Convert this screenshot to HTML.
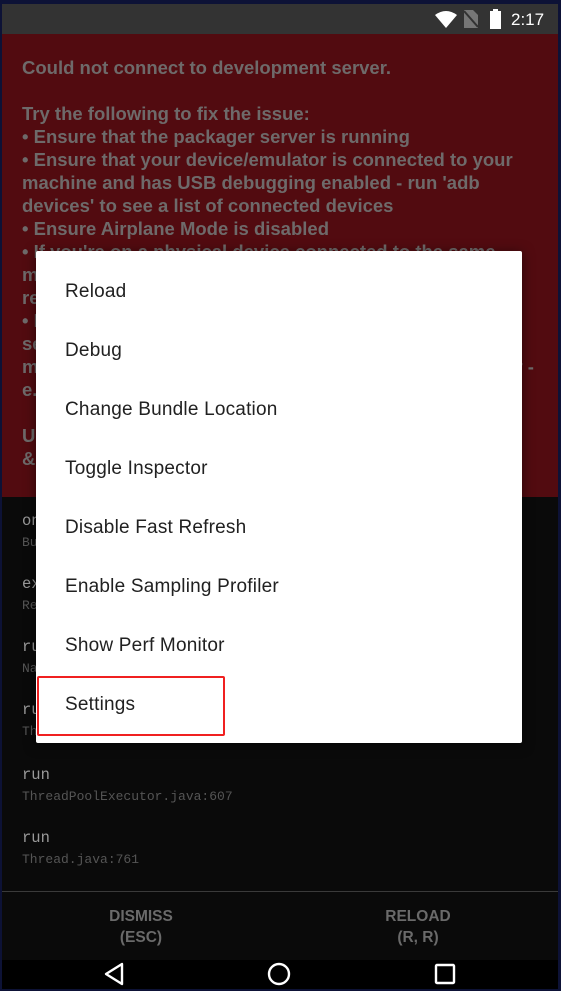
<!DOCTYPE html>
<html><head><meta charset="utf-8"><style>
*{margin:0;padding:0;box-sizing:border-box}
body{width:561px;height:991px;background:#0d1236;position:relative;overflow:hidden;font-family:"Liberation Sans",sans-serif}
#scr{position:absolute;left:2px;top:4px;width:556px;height:985px;background:#0a0a0a;overflow:hidden}
#sb{position:absolute;left:0;top:0;width:556px;height:30px;background:#333}
#red{position:absolute;left:0;top:30px;width:556px;height:463px;background:#520b10}
.rt{position:absolute;left:20px;font-weight:bold;font-size:18.5px;line-height:23px;color:#6e6a6a;white-space:nowrap}
.tr{position:absolute;left:20px;font-family:"Liberation Mono",monospace;white-space:nowrap}
.t1{font-size:15.5px;color:#9a9a9a}
.t2{font-size:13px;color:#555}
#sep{position:absolute;left:0;top:887px;width:556px;height:1px;background:#3a3a3a}
.bt{position:absolute;top:902px;width:200px;text-align:center;font-size:15.5px;font-weight:bold;line-height:21px;color:#6a6a6a}
#nav{position:absolute;left:0;top:956px;width:556px;height:29px;background:#000}
#dlg{position:absolute;left:34px;top:247px;width:486px;height:492px;background:#fff;border-radius:2px;box-shadow:0 2px 12px rgba(0,0,0,.5)}
.it{position:absolute;left:29px;font-size:19px;letter-spacing:0.2px;color:#212121;line-height:20px}
#hl{position:absolute;left:1px;top:425px;width:188px;height:60px;border:2px solid #f02020;border-radius:2px}
</style></head><body>
<div id="scr">
<div id="sb">
<svg style="position:absolute;left:433px;top:7px" width="22" height="17" viewBox="0 0 22 17"><path d="M0 4 Q11 -4 22 4 L11 17Z" fill="#fff"/></svg>
<svg style="position:absolute;left:462px;top:6px" width="14" height="18" viewBox="0 0 14 18"><path d="M0 18V0h9l5 5v13z" fill="#777"/><path d="M0 1L14 17" stroke="#333" stroke-width="2"/></svg>
<svg style="position:absolute;left:488px;top:5px" width="11" height="20" viewBox="0 0 11 20"><rect x="3" y="0" width="5" height="3" fill="#fff"/><rect x="0" y="2" width="11" height="18" fill="#fff"/></svg>
<div style="position:absolute;left:509px;top:6px;color:#fff;font-size:17px">2:17</div>
</div>
<div id="red">
<div class="rt" style="top:22px">Could not connect to development server.</div>
<div class="rt" style="top:68px">Try the following to fix the issue:</div>
<div class="rt" style="top:91px">• Ensure that the packager server is running</div>
<div class="rt" style="top:114px">• Ensure that your device/emulator is connected to your</div>
<div class="rt" style="top:137px">machine and has USB debugging enabled - run 'adb</div>
<div class="rt" style="top:160px">devices' to see a list of connected devices</div>
<div class="rt" style="top:183px">• Ensure Airplane Mode is disabled</div>
<div class="rt" style="top:206px">• If you're on a physical device connected to the same</div>
<div class="rt" style="top:229px">machine, run 'adb reverse tcp:8081 tcp:8081' to forward</div>
<div class="rt" style="top:252px">requests from your device</div>
<div class="rt" style="top:275px">• If your device is on the same Wi-Fi network, set 'Debug</div>
<div class="rt" style="top:298px">server host &amp; port for device' in 'Dev settings' to your</div>
<div class="rt" style="top:321px">machine's IP address and the port of the local dev server -</div>
<div class="rt" style="top:344px">e.g. 10.0.1.1:8081</div>
<div class="rt" style="top:390px">URL: 10.0.2.2:8081/index.bundle?platform=android</div>
<div class="rt" style="top:413px">&amp;dev=true&amp;minify=false</div>
</div>
<div class="tr t1" style="top:508px">onWebSocketMessage</div><div class="tr t2" style="top:531px">BundleDownloader.java:123</div>
<div class="tr t1" style="top:571px">execute</div><div class="tr t2" style="top:594px">RealCall.java:123</div>
<div class="tr t1" style="top:634px">run</div><div class="tr t2" style="top:657px">NamedRunnable.java:32</div>
<div class="tr t1" style="top:697px">run</div><div class="tr t2" style="top:720px">ThreadPoolExecutor.java:1133</div>
<div class="tr t1" style="top:762px">run</div><div class="tr t2" style="top:785px">ThreadPoolExecutor.java:607</div>
<div class="tr t1" style="top:825px">run</div><div class="tr t2" style="top:848px">Thread.java:761</div>
<div id="sep"></div>
<div class="bt" style="left:39px">DISMISS<br>(ESC)</div>
<div class="bt" style="left:316px">RELOAD<br>(R, R)</div>
<div id="nav">
<svg style="position:absolute;left:101px;top:2px" width="22" height="24" viewBox="0 0 22 24"><path d="M19 2L3 12L19 22Z" fill="none" stroke="#fff" stroke-width="2.4" stroke-linejoin="round"/></svg>
<svg style="position:absolute;left:265px;top:2px" width="24" height="24" viewBox="0 0 24 24"><circle cx="12" cy="12" r="10" fill="none" stroke="#fff" stroke-width="2.4"/></svg>
<svg style="position:absolute;left:432px;top:3px" width="22" height="22" viewBox="0 0 22 22"><rect x="2" y="2" width="18" height="18" fill="none" stroke="#fff" stroke-width="2.4" rx="1"/></svg>
</div>
<div id="dlg">
<div class="it" style="top:31px">Reload</div>
<div class="it" style="top:90px">Debug</div>
<div class="it" style="top:149px">Change Bundle Location</div>
<div class="it" style="top:208px">Toggle Inspector</div>
<div class="it" style="top:267px">Disable Fast Refresh</div>
<div class="it" style="top:326px">Enable Sampling Profiler</div>
<div class="it" style="top:385px">Show Perf Monitor</div>
<div class="it" style="top:444px">Settings</div>
<div id="hl"></div>
</div>
</div>
</body></html>
